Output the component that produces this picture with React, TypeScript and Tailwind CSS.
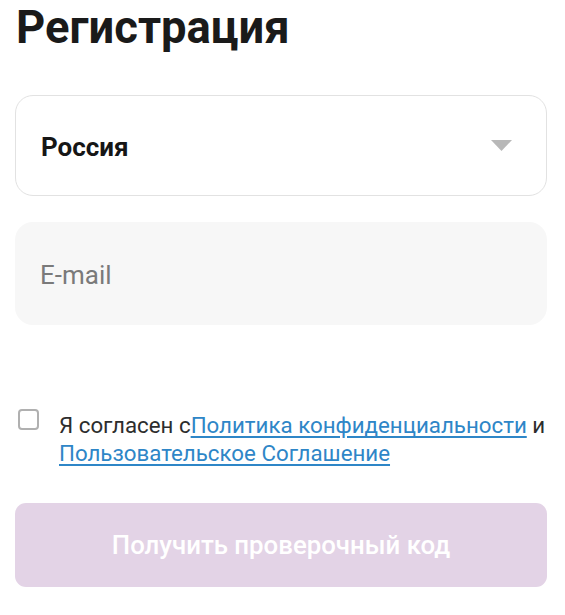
import { useState } from 'react';

export default function App() {
  const [agreed, setAgreed] = useState(false);

  return (
    <div className="w-[565px] h-[615px] bg-white pl-[15px] pr-[18px] overflow-hidden" style={{ fontFamily: 'Roboto, "Noto Sans", sans-serif' }}>
      <h1 className="text-[45.4px] leading-[56px] font-bold text-[#1a1a1a] pl-px">Регистрация</h1>

      <button
        type="button"
        className="mt-[39px] w-full h-[101px] rounded-[18px] border border-[#e2e2e2] bg-white flex items-center justify-between pl-[25px] pr-[34px]"
      >
        <span className="text-[26px] leading-[30px] font-bold text-[#161616] mt-[2px]">Россия</span>
        <svg width="21" height="11" viewBox="0 0 21 11" className="text-[#b8b8b8]">
          <path d="M0 0h21L10.5 11z" fill="currentColor" />
        </svg>
      </button>

      <div className="mt-[26px] w-full h-[103px] rounded-[18px] bg-[#f7f7f7] flex items-center pl-[25px] pt-[4px]">
        <input
          type="email"
          placeholder="E-mail"
          className="w-full bg-transparent outline-none text-[26px] text-[#222] placeholder:text-[#7a7a7a]"
        />
      </div>

      <div className="mt-[84px] flex items-start gap-[20px] pl-[3px]">
        <button
          type="button"
          onClick={() => setAgreed(!agreed)}
          className={`shrink-0 w-[21px] h-[21px] rounded-[4px] border-2 ${agreed ? 'bg-[#2b86c5] border-[#2b86c5]' : 'border-[#b0b0b0]'}`}
        />
        <p className="text-[22.3px] leading-[28px] text-[#2d2d2d] mt-[2px]">
          Я согласен с
          <a href="#" className="text-[#2e86c7] underline underline-offset-[3px]">Политика конфиденциальности</a> и{' '}
          <a href="#" className="text-[#2e86c7] underline underline-offset-[3px]">Пользовательское Соглашение</a>
        </p>
      </div>

      <button
        type="button"
        disabled
        className="mt-[36px] w-full h-[84px] rounded-[11px] bg-[#e3d3e6] text-white text-[25.8px] font-medium"
      >
        Получить проверочный код
      </button>
    </div>
  );
}
